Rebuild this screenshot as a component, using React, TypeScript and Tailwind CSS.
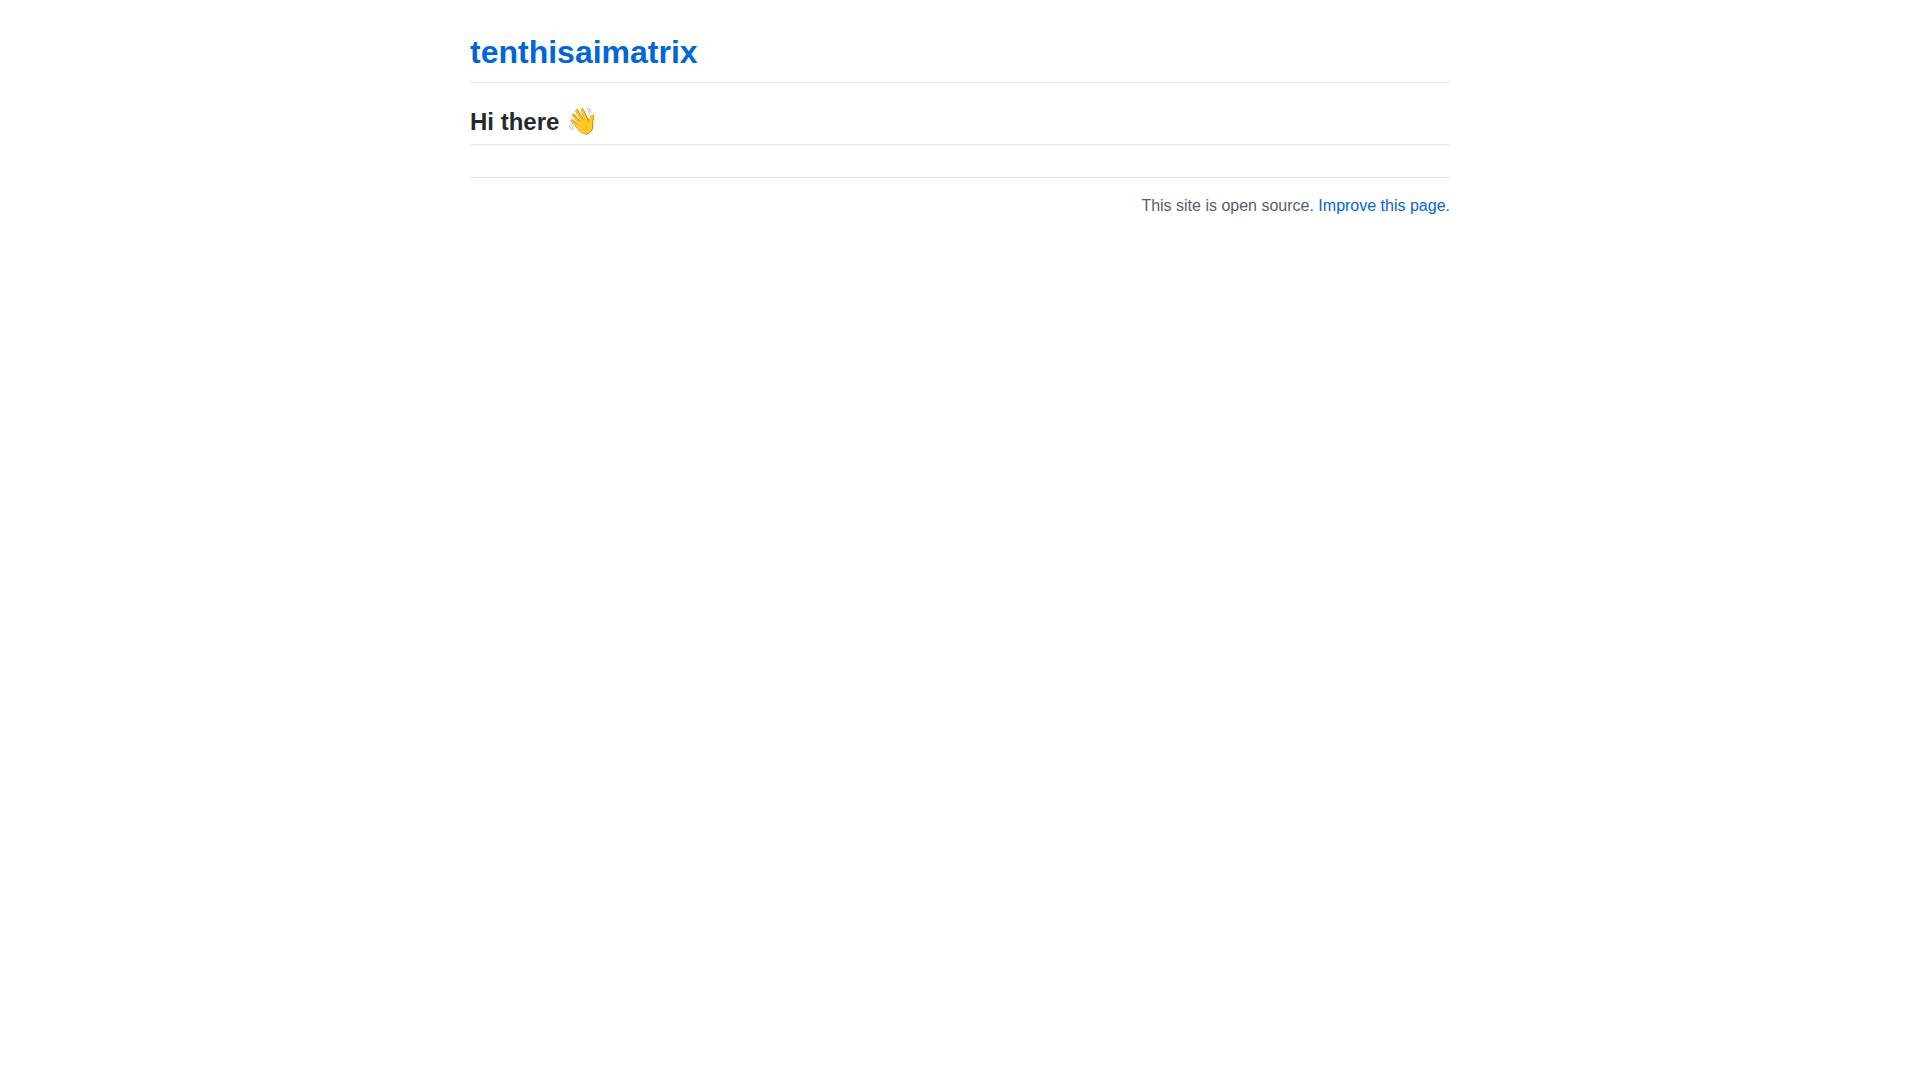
export default function App() {
  return (
    <div className="mx-auto my-8 max-w-[1012px] px-4 font-['Liberation_Sans',Arial,sans-serif] text-base leading-6 text-[#24292e]">
      {/* Site title */}
      <h1 className="mb-4 border-b border-[#e8e8e8] pb-[10px] text-[32px] leading-[40px] font-semibold">
        <a href="/" className="text-[#0366d6] hover:underline">
          tenthisaimatrix
        </a>
      </h1>

      <main>
        <h2 className="mt-6 mb-4 border-b border-[#e8e8e8] pb-[7px] text-2xl leading-[30px] font-semibold">
          Hi there <span className="text-[26px] leading-none">👋</span>
        </h2>
      </main>

      {/* Footer */}
      <footer className="mt-8 border-t border-[#e1e1e1] pt-4 text-right text-[#586069]">
        This site is open source.{' '}
        <a href="/edit" className="text-[#0366d6] hover:underline">
          Improve this page
        </a>
        .
      </footer>
    </div>
  );
}
